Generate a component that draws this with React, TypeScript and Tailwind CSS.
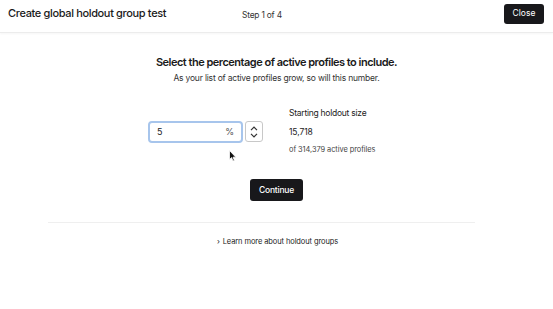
import React from "react";

export default function App() {
  return (
    <div className="relative w-[553px] h-[309px] bg-white overflow-hidden text-[#1a1a1a]" style={{ fontFamily: "Inter, 'Liberation Sans', sans-serif" }}>
      <header className="flex items-center h-[33px] border-b border-[#ececec] shadow-[0_1px_2px_rgba(0,0,0,0.04)] pl-[8px] pr-[9px]">
        <div className="w-[234px] text-[11px] tracking-[-0.35px] font-medium leading-none -mt-[6px]">Create global holdout group test</div>
        <div className="text-[8.4px] tracking-[-0.2px] text-[#333] leading-none -mt-[2px]">Step 1 of 4</div>
        <div className="flex-1" />
        <button className="h-[20px] w-[40px] rounded-[3px] bg-[#18181b] text-white text-[8.5px] leading-none -mt-[5px]">Close</button>
      </header>
      <div className="flex flex-col items-center pt-[22px]">
        <h1 className="text-[11px] tracking-[-0.5px] font-semibold leading-[14px]">Select the percentage of active profiles to include.</h1>
        <p className="mt-[2px] text-[8.5px] tracking-[-0.2px] leading-[14px] text-[#333]">As your list of active profiles grow, so will this number.</p>
      </div>
      <div className="flex pl-[148px] pt-[22px]">
        <div className="flex items-start pt-[14px]">
          <div className="flex items-center justify-between w-[95px] h-[22px] rounded-[4px] border-2 border-[#a7c5ec] px-[7px] text-[9px]">
            <span>5</span>
            <span className="text-[#555]">%</span>
          </div>
          <div className="ml-[2px] flex flex-col items-center justify-center w-[18px] h-[21px] rounded-[3px] border border-[#c8c8c8]">
            <svg width="8" height="5" viewBox="0 0 8 5" fill="none" stroke="#333" strokeWidth="1.2"><path d="M1 4.2 4 1.2 7 4.2" /></svg>
            <svg width="8" height="5" viewBox="0 0 8 5" fill="none" stroke="#333" strokeWidth="1.2" className="mt-[2px]"><path d="M1 0.8 4 3.8 7 0.8" /></svg>
          </div>
        </div>
        <div className="ml-[26px] flex flex-col text-[#222]">
          <div className="text-[8.5px] tracking-[-0.25px] leading-[12px]">Starting holdout size</div>
          <div className="mt-[7px] text-[8.5px] tracking-[-0.1px] leading-[12px]">15,718</div>
          <div className="mt-[6px] text-[7.4px] tracking-[-0.05px] leading-[12px] text-[#444]">of 314,379 active profiles</div>
        </div>
      </div>
      <div className="flex justify-center pt-[23px]">
        <button className="h-[22px] w-[53px] rounded-[3px] bg-[#18181b] text-white text-[8.5px] tracking-[-0.2px] font-medium leading-none">Continue</button>
      </div>
      <div className="ml-[48px] w-[427px] mt-[21px] border-t border-[#efefef]" />
      <div className="flex justify-center pt-[13px] pl-[2px] text-[7.5px] tracking-[-0.1px] leading-[12px] text-[#222]">
        <span className="mr-[3px]">›</span>Learn more about holdout groups
      </div>
      <svg className="absolute left-[229px] top-[150px]" width="8" height="12" viewBox="0 0 8 12">
        <path d="M0.5 0.5 L0.5 9.5 L2.6 7.6 L4 11 L5.4 10.4 L4 7.2 L6.8 7.2 Z" fill="#111" stroke="#fff" strokeWidth="0.8" />
      </svg>
    </div>
  );
}
